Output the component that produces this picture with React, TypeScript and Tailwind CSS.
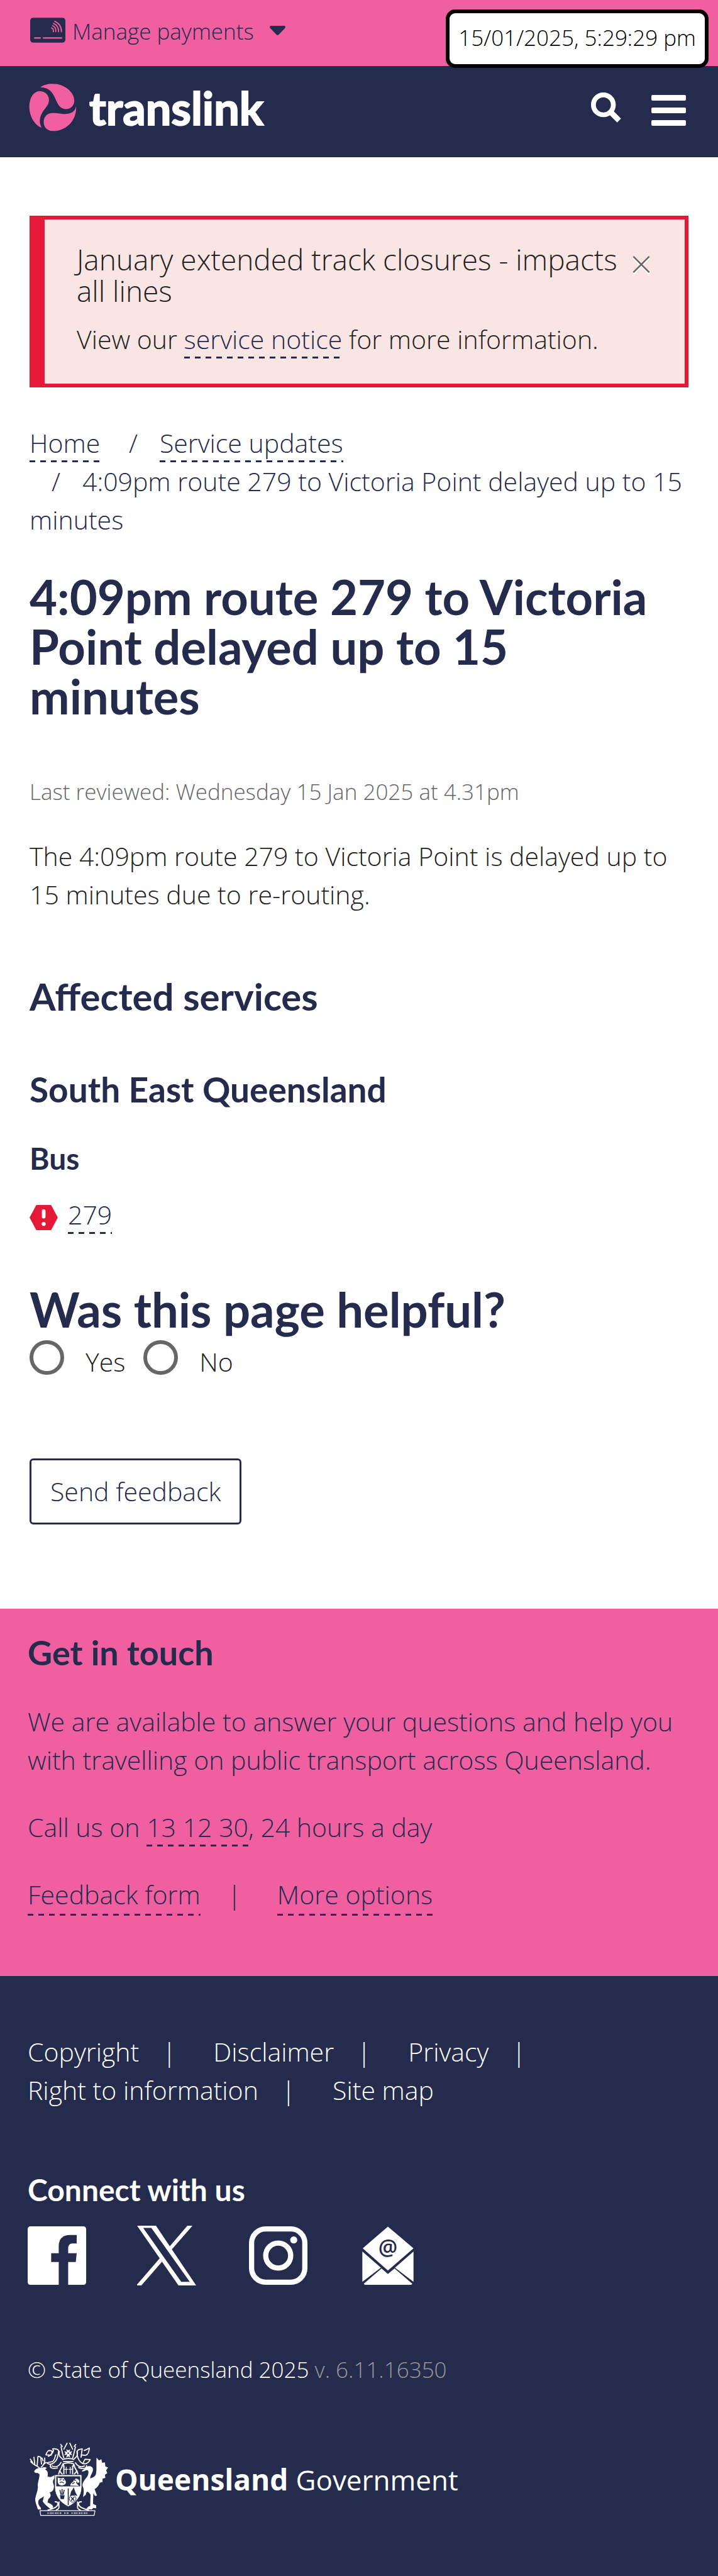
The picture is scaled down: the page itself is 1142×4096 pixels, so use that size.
import type { ReactNode } from "react";

const body = "text-[41px] leading-[61px]";
const heading = "font-[Lato,sans-serif] font-bold text-[#252b4c]";

function DashedLink({ href = "#", children }: { href?: string; children: ReactNode }) {
  return (
    <a
      href={href}
      className="whitespace-nowrap bg-[repeating-linear-gradient(90deg,#252b4c_0_9px,transparent_9px_17px)] bg-[length:100%_3px] bg-bottom bg-no-repeat pb-[3px] text-[#252b4c]"
    >
      {children}
    </a>
  );
}

function CardIcon() {
  return (
    <svg viewBox="0 0 58 41" className="h-10 w-14" aria-hidden="true">
      <rect width="58" height="41" rx="5" fill="#252b4c" />
      <g fill="none" stroke="#f060a1" strokeWidth="1.9" strokeLinecap="round">
        <path d="M6.5 33.3H17.5M21 33.3H52.5" strokeWidth="2.4" strokeLinecap="butt" />
        <path d="M35.3 16.8C37.4 17.6 38.4 20 38.2 23" />
        <path d="M36.9 13C40.6 14.4 42.5 18.4 42.2 23" />
        <path d="M38.5 9.4C44 11.3 47 17 46.8 23" />
        <path d="M40.3 5.9C47.5 8.4 51.8 15.5 51.4 23" />
      </g>
    </svg>
  );
}

function LogoMark() {
  return (
    <svg viewBox="22 25 236 236" className="h-[76px] w-[76px]" fill="#f060a1" aria-hidden="true">
      <path d="M78 44C92 32 115 26 140 26C198 26 246 68 246 108C246 134 228 151 205 151C172 151 163 122 151 96C138 66 118 43 78 44Z" />
      <path d="M85 243C71 217 73 192 90 165C105 142 121 130 121 106C121 80 102 62 75 62C45 62 24 95 24 140C24 188 52 231 85 243Z" />
      <path d="M255 137C249 167 225 178 185 174C158 171 142 169 125 172C108 176 95 192 95 215C95 240 112 259 142 259C208 259 260 203 255 137Z" />
    </svg>
  );
}

function FacebookIcon() {
  return (
    <svg viewBox="0 0 96 96" className="h-[93px] w-[93px]" aria-hidden="true">
      <path
        fill="#fff"
        d="M5 0H91Q96 0 96 5V91Q96 96 91 96H66.5V58.7H79L80.5 44H66.5V36Q66.5 28 73.5 28H80.5V14.3H69.8Q51 14.3 51 33V44H38.6V58.7H51V96H5Q0 96 0 91V5Q0 0 5 0Z"
      />
    </svg>
  );
}

function XIcon() {
  return (
    <svg viewBox="0 0 97 98" className="h-[95px] w-[94px]" fill="#fff" aria-hidden="true">
      <path fillRule="evenodd" d="M0 0H31L97 98H68ZM10 3.5H23.4L86.5 92H72.5Z" />
      <path d="M82.6 0H91L56.5 39.5L53 34.5ZM0 98V96.5L37.5 53L41 59L7 98Z" />
    </svg>
  );
}

function InstagramIcon() {
  return (
    <svg viewBox="0 0 96 96" className="h-[93px] w-[93px]" aria-hidden="true">
      <rect x="4.3" y="4.3" width="87.4" height="87.4" rx="23" fill="none" stroke="#fff" strokeWidth="8.6" />
      <circle cx="48" cy="48" r="20.5" fill="none" stroke="#fff" strokeWidth="8.6" />
      <circle cx="73.5" cy="22.4" r="5.8" fill="#fff" />
    </svg>
  );
}

function MailIcon() {
  return (
    <svg viewBox="42 43 256 290" className="h-[93px] w-[82px]" fill="#fff" aria-hidden="true">
      <path d="M170 44L297 152L170 262L45 152Z" />
      <path d="M43 168L135 248L43 318ZM297 168L205 248L297 318Z" />
      <path d="M50 328L138 252L170 279L203 252L291 328Q289 333 283 333H58Q52 333 50 328Z" />
      <text x="170" y="188" textAnchor="middle" fontFamily="Open Sans, sans-serif" fontWeight="600" fontSize="106" fill="#252b4c">
        @
      </text>
    </svg>
  );
}

function Crest() {
  return (
    <svg viewBox="18 20 394 372" className="h-[118px] w-[127px]" fill="#fff" aria-hidden="true">
      <g fill="none" stroke="#fff" strokeWidth="5.5" strokeLinejoin="round" strokeLinecap="round">
        {/* stag antlers */}
        <path d="M66 148C52 138 36 134 24 118M44 130L40 96M56 140L60 92M34 124L22 106M76 146C92 134 96 118 94 100M86 134L100 122M78 130L74 96L64 92M86 114L80 100" />
        {/* mantling */}
        <path d="M120 62C104 62 104 78 100 84L126 86L132 66ZM112 92C124 86 134 78 138 62L134 54C146 52 162 56 164 64C160 96 156 112 140 124C128 136 112 132 104 124L132 118C146 112 144 92 150 84" />
        <path d="M292 62C308 58 312 52 318 50C316 68 312 84 300 86C286 88 280 78 276 96L282 54C268 56 258 58 256 70C256 96 264 112 276 122C290 134 310 132 322 108L296 106L288 122" />
        <path d="M130 140C150 150 166 140 176 122M124 132C116 150 134 156 158 150M294 140C272 150 258 140 248 124M304 138C306 154 282 156 264 148" />
        {/* sugar cane and maltese cross */}
        <path d="M176 44C180 62 184 84 190 100M248 44C244 62 240 84 234 100M190 56L206 26M234 56L220 26M168 66C162 88 172 96 182 104M256 66C262 88 252 96 242 104M182 42L174 32M242 42L250 32" />
        <path d="M184 108C196 100 230 100 240 108M188 118H236M184 130C200 124 224 124 240 130L236 144M188 130L190 144" />
        {/* helmet */}
        <path d="M182 136C180 156 166 158 164 182M242 136C244 156 256 158 260 180M190 140V180M234 140V180M168 164L182 182M256 164L242 182" strokeWidth="6" />
        <path d="M202 146V178M222 146V178M194 157H209M215 157H230" strokeWidth="4" />
      </g>
      <path d="M202 56L212 62L222 56L218 70L232 66L226 76L232 86L218 82L222 98L212 92L202 98L206 82L192 86L198 76L192 66L206 70Z" />
      <circle cx="212" cy="76" r="4" fill="#252b4c" />
      {/* red deer */}
      <path d="M44 162C52 152 66 148 78 150C90 144 98 146 104 150L96 158C110 164 112 176 108 192C118 198 128 196 142 186L148 194L140 206C132 216 136 226 140 238C142 262 130 270 118 272C128 286 124 296 112 306L108 322C122 330 136 334 136 346L128 358C110 348 94 332 84 318L90 292C78 302 66 304 62 316C60 330 66 340 74 348L76 358H60C54 338 46 322 46 306C50 284 58 268 60 246C56 226 68 204 68 184C66 176 56 176 46 174C40 170 40 166 44 162Z" />
      {/* brolga */}
      <path d="M278 166C288 160 294 154 304 144C320 136 336 144 336 158C336 172 322 188 322 202C334 200 344 194 350 184C356 160 352 132 354 98L366 112L378 106L382 124L396 122L398 142L412 148L402 162L408 176L396 184L398 200L384 204L384 220L370 224C364 240 356 248 344 256L356 288L346 290L338 276L336 330L352 338V352L338 350L330 358L302 356L312 344L322 340L324 284C314 270 306 258 300 284L286 296C290 276 292 256 284 240C280 220 302 204 310 188C314 176 316 162 306 160C296 162 290 170 278 166Z" />
      {/* shield */}
      <path d="M144 184H280V246C280 292 250 326 212 344C174 326 144 292 144 246Z" stroke="#252b4c" strokeWidth="3" />
      <path d="M152 192H272V242H152Z" fill="#252b4c" />
      <path d="M212 252V336" stroke="#252b4c" strokeWidth="5" />
      <path d="M158 196C166 204 182 204 188 198C194 212 206 216 198 230C190 240 166 240 162 228C156 218 162 208 158 196ZM222 238C224 222 240 222 240 210C250 196 270 208 268 222L258 226C258 212 248 216 254 228L266 240Z" />
      <path d="M168 210L178 208M184 208L192 212M170 224C176 218 186 220 190 226M232 230L244 222M246 204C238 208 244 214 252 210" stroke="#252b4c" strokeWidth="4" fill="none" />
      <path d="M170 260L176 284M181 256V284M192 260L186 284" stroke="#252b4c" strokeWidth="5" />
      <path d="M170 286H194L190 306H174Z" fill="#252b4c" />
      <path d="M220 294L226 268L232 260L240 248L248 272L258 290L244 286L232 288Z" fill="#252b4c" />
      <circle cx="234" cy="304" r="17" stroke="#252b4c" strokeWidth="3" />
      <path d="M226 296L242 314M242 296L226 314" stroke="#252b4c" strokeWidth="5" />
      {/* scroll */}
      <g fill="none" stroke="#fff" strokeWidth="6" strokeLinejoin="round">
        <path d="M144 320C154 318 162 322 160 332C156 348 136 354 108 362M280 320C270 318 262 322 264 332C268 348 288 354 316 362M166 318C160 344 176 352 150 362M258 318C264 344 248 352 274 362" />
        <path d="M70 364H346L342 388H74Z" strokeWidth="4" />
      </g>
      <path d="M108 376H180M192 376H214M228 376H310" stroke="#fff" strokeWidth="8" strokeDasharray="5 3 2 4 7 3" opacity=".75" />
    </svg>
  );
}

function HazardIcon() {
  return (
    <svg viewBox="0 0 46 41" className="mt-2 h-10 w-[45px]" aria-hidden="true">
      <path d="M0 20.5L11 0H35L46 20.5L35 41H11Z" fill="#e31937" />
      <rect x="20" y="7" width="6" height="15" rx="3" fill="#fff" />
      <circle cx="23" cy="31" r="3.2" fill="#fff" />
    </svg>
  );
}

function Choice({ id, label }: { id: string; label: string }) {
  return (
    <div className="flex items-start">
      <input
        type="radio"
        name="helpful"
        id={id}
        className="size-[55px] appearance-none rounded-full border-[6px] border-[#666] bg-white checked:bg-[#252b4c]"
      />
      <label htmlFor={id} className={`${body} pt-1 pl-[34px] text-[#222]`}>
        {label}
      </label>
    </div>
  );
}

const legalLinks = ["Copyright", "Disclaimer", "Privacy", "Right to information", "Site map"];

export default function App() {
  return (
    <div className="relative w-full bg-white font-['Open_Sans',sans-serif] font-light text-[#222]">
      <div className="flex h-[105px] items-start bg-[#f060a1] px-12">
        <button type="button" className="flex h-24 items-center text-[35px] text-[#252b4c]">
          <CardIcon />
          <span className="ml-[11px] pt-1">Manage payments</span>
          <svg viewBox="0 0 27 16" className="ml-6 h-[15px] w-[27px]" fill="#252b4c" aria-hidden="true">
            <path d="M2 0H25Q28 1 26 4L15.500 15Q13.500 17 11.500 15L1 4Q-1 1 2 0Z" />
          </svg>
        </button>
      </div>
      <div className="absolute top-[15px] right-[15px] flex h-[93px] items-center rounded-[15px] border-[6px] border-black bg-white px-[14px] pb-0.5 text-[35px] text-black">
        15/01/2025, 5:29:29 pm
      </div>

      <header className="flex h-[145px] items-center justify-between bg-[#252b4c] pr-[51px] pb-[13px] pl-[46px]">
        <a href="#" className="flex items-center gap-[20px]">
          <LogoMark />
          <span className="font-[Lato,sans-serif] text-[72px] leading-[76px] font-bold text-white [-webkit-text-stroke:2px_white]">
            translink
          </span>
        </a>
        <div className="flex items-center gap-12">
          <button type="button" aria-label="Search">
            <svg viewBox="0 0 50 50" className="size-12" fill="none" stroke="#fff" aria-hidden="true">
              <circle cx="20.500" cy="20.500" r="16.500" strokeWidth="8" />
              <path d="M34 34L46.500 46.500" strokeWidth="9" />
            </svg>
          </button>
          <button type="button" aria-label="Menu" className="flex flex-col gap-[11px] pt-2">
            <span className="h-[9px] w-[55px] rounded-xs bg-white" />
            <span className="h-[9px] w-[55px] rounded-xs bg-white" />
            <span className="h-[9px] w-[55px] rounded-xs bg-white" />
          </button>
        </div>
      </header>

      <main className="px-[47px] pt-[93px]">
        <section
          role="alert"
          className="flex items-start justify-between border-[6px] border-l-[24px] border-[#e31937] bg-[#f9e5e3] pt-[38px] pr-[55px] pb-[40px] pl-[51px]"
        >
          <div>
            <h2 className="text-[46px] leading-[50px]">
              January extended track closures - impacts
              <br />
              all lines
            </h2>
            <p className={`${body} mt-[22px]`}>
              View our <DashedLink>service notice</DashedLink> for more information.
            </p>
          </div>
          <button type="button" aria-label="Close" className="mt-5">
            <svg viewBox="0 0 28 31" className="h-[30px] w-7" fill="none" aria-hidden="true">
              <path d="M1 4L27 30M27 4L1 30" stroke="#fff" strokeWidth="2.500" />
              <path d="M1 1L27 27M27 1L1 27" stroke="#666" strokeWidth="2.500" />
            </svg>
          </button>
        </section>

        <nav aria-label="Breadcrumb" className={`${body} mt-[58px] text-[#252b4c]`}>
          <ol>
            <li className="inline-block">
              <DashedLink>Home</DashedLink>
            </li>{" "}
            <li className="inline-block">
              <span className="px-[35px]">/</span>
              <DashedLink>Service updates</DashedLink>
            </li>{" "}
            <li className="inline-block">
              <span className="px-[35px]">/</span>4:09pm route 279 to Victoria Point delayed up to 15 minutes
            </li>
          </ol>
        </nav>

        <h1 className={`${heading} mt-[52px] text-[76px] leading-[79px]`}>
          4:09pm route 279 to Victoria
          <br />
          Point delayed up to 15
          <br />
          minutes
        </h1>
        <p className="mt-[86px] text-[35px] leading-[54px] text-[#666]">Last reviewed: Wednesday 15 Jan 2025 at 4.31pm</p>
        <p className={`${body} mt-[45px]`}>
          The 4:09pm route 279 to Victoria Point is delayed up to 15 minutes due to re-routing.
        </p>

        <h2 className={`${heading} mt-[99px] text-[60px] leading-[64px]`}>Affected services</h2>
        <h3 className={`${heading} mt-[87px] text-[55px] leading-[58px]`}>South East Queensland</h3>
        <h4 className={`${heading} mt-[55px] text-[48px] leading-[52px]`}>Bus</h4>
        <div className={`${body} mt-[33px] flex items-center gap-4`}>
          <HazardIcon />
          <span>
            <DashedLink>279</DashedLink>
          </span>
        </div>

        <form className="pt-[80px]">
          <fieldset>
            <legend className={`${heading} text-[76px] leading-[79px]`}>Was this page helpful?</legend>
            <div className="flex gap-[29px] pt-2.5">
              <Choice id="yes" label="Yes" />
              <Choice id="no" label="No" />
            </div>
          </fieldset>
          <button
            type="button"
            className={`${body} mt-[123px] rounded-md border-[3px] border-[#252b4c] px-[30px] py-[19px] text-[#252b4c]`}
          >
            Send feedback
          </button>
        </form>
      </main>

      <section className="mt-[134px] bg-[#f060a1] px-11 pt-[41px] pb-[96px] text-[#252b4c]">
        <h2 className={`${heading} text-[54px] leading-[58px]`}>Get in touch</h2>
        <p className={`${body} mt-[50px]`}>
          We are available to answer your questions and help you with travelling on public transport across Queensland.
        </p>
        <p className={`${body} mt-[46px]`}>
          Call us on <DashedLink>13 12 30</DashedLink>, 24 hours a day
        </p>
        <p className={`${body} mt-[46px] flex`}>
          <DashedLink>Feedback form</DashedLink>
          <span className="pr-[57px] pl-[43px]">|</span>
          <DashedLink>More options</DashedLink>
        </p>
      </section>

      <footer className="bg-[#252b4c] px-11 pt-[90px] pb-24 text-white">
        <ul className={`${body} flex flex-wrap gap-x-[59px]`}>
          {legalLinks.map((label, i) => (
            <li key={label}>
              <a href="#">{label}</a>
              {i < legalLinks.length - 1 && <span className="pl-[37px]">|</span>}
            </li>
          ))}
        </ul>
        <h2 className="mt-[101px] font-[Lato,sans-serif] text-[48px] leading-[54px] font-bold">Connect with us</h2>
        <div className="mt-[30px] flex items-center">
          <a href="#" aria-label="Facebook">
            <FacebookIcon />
          </a>
          <a href="#" aria-label="X" className="ml-[81px]">
            <XIcon />
          </a>
          <a href="#" aria-label="Instagram" className="ml-[84px]">
            <InstagramIcon />
          </a>
          <a href="#" aria-label="Subscribe by email" className="ml-[87px]">
            <MailIcon />
          </a>
        </div>
        <p className="mt-[107px] text-[35px] leading-[54px]">
          © State of Queensland 2025 <span className="text-[#999]">v. 6.11.16350</span>
        </p>
        <a href="#" className="mt-[88px] flex items-center gap-[10px] pl-0.5 text-[46px] leading-[60px]">
          <Crest />
          <span>
            <span className="font-bold">Queensland</span> <span className="text-[44px] font-normal">Government</span>
          </span>
        </a>
      </footer>
    </div>
  );
}
